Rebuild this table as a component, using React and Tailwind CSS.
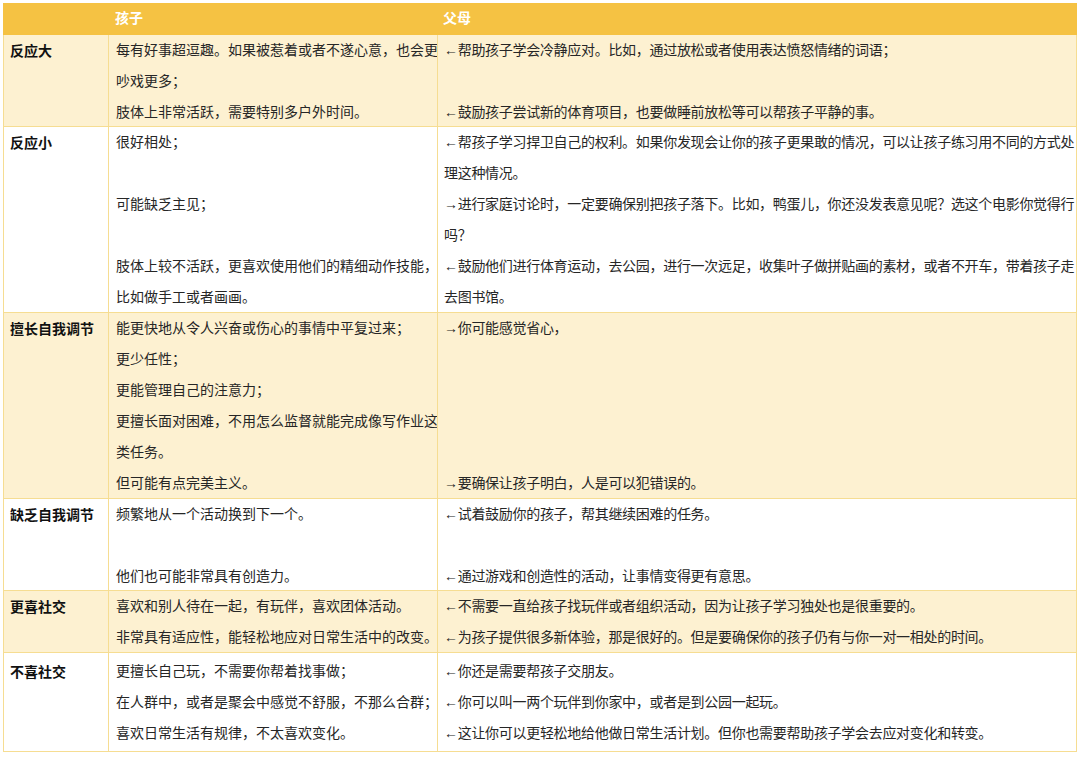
const rows = [
  {
    label: "反应大",
    shade: true,
    h: "h-[92px]",
    child: [
      "每有好事超逗趣。如果被惹着或者不遂心意，也会更",
      "吵戏更多；",
      "肢体上非常活跃，需要特别多户外时间。",
    ],
    parent: [
      "←帮助孩子学会冷静应对。比如，通过放松或者使用表达愤怒情绪的词语；",
      "",
      "←鼓励孩子尝试新的体育项目，也要做睡前放松等可以帮孩子平静的事。",
    ],
  },
  {
    label: "反应小",
    shade: false,
    h: "h-[186px]",
    child: [
      "很好相处；",
      "",
      "可能缺乏主见；",
      "",
      "肢体上较不活跃，更喜欢使用他们的精细动作技能，",
      "比如做手工或者画画。",
    ],
    parent: [
      "←帮孩子学习捍卫自己的权利。如果你发现会让你的孩子更果敢的情况，可以让孩子练习用不同的方式处",
      "理这种情况。",
      "→进行家庭讨论时，一定要确保别把孩子落下。比如，鸭蛋儿，你还没发表意见呢？选这个电影你觉得行",
      "吗？",
      "←鼓励他们进行体育运动，去公园，进行一次远足，收集叶子做拼贴画的素材，或者不开车，带着孩子走",
      "去图书馆。",
    ],
  },
  {
    label: "擅长自我调节",
    shade: true,
    h: "h-[186px]",
    child: [
      "能更快地从令人兴奋或伤心的事情中平复过来；",
      "更少任性；",
      "更能管理自己的注意力；",
      "更擅长面对困难，不用怎么监督就能完成像写作业这",
      "类任务。",
      "但可能有点完美主义。",
    ],
    parent: [
      "→你可能感觉省心，",
      "",
      "",
      "",
      "",
      "→要确保让孩子明白，人是可以犯错误的。",
    ],
  },
  {
    label: "缺乏自我调节",
    shade: false,
    h: "h-[92px]",
    child: ["频繁地从一个活动换到下一个。", "", "他们也可能非常具有创造力。"],
    parent: [
      "←试着鼓励你的孩子，帮其继续困难的任务。",
      "",
      "←通过游戏和创造性的活动，让事情变得更有意思。",
    ],
  },
  {
    label: "更喜社交",
    shade: true,
    h: "h-[62px]",
    child: [
      "喜欢和别人待在一起，有玩伴，喜欢团体活动。",
      "非常具有适应性，能轻松地应对日常生活中的改变。",
    ],
    parent: [
      "←不需要一直给孩子找玩伴或者组织活动，因为让孩子学习独处也是很重要的。",
      "←为孩子提供很多新体验，那是很好的。但是要确保你的孩子仍有与你一对一相处的时间。",
    ],
  },
  {
    label: "不喜社交",
    shade: false,
    h: "h-[99px]",
    child: [
      "更擅长自己玩，不需要你帮着找事做；",
      "在人群中，或者是聚会中感觉不舒服，不那么合群；",
      "喜欢日常生活有规律，不太喜欢变化。",
    ],
    parent: [
      "←你还是需要帮孩子交朋友。",
      "←你可以叫一两个玩伴到你家中，或者是到公园一起玩。",
      "←这让你可以更轻松地给他做日常生活计划。但你也需要帮助孩子学会去应对变化和转变。",
    ],
  },
];

function Lines({ items, className }) {
  return (
    <div className={className}>
      {items.map((t, i) => (
        <div key={i} className="h-[31px] whitespace-nowrap leading-[31px]">
          {t}
        </div>
      ))}
    </div>
  );
}

export default function App() {
  return (
    <div className="min-h-screen bg-white px-[3px] pt-[3px] font-['Liberation_Serif','Noto_Sans_CJK_SC',serif] text-[14px] text-[#262626]">
      <div className="grid h-[32px] grid-cols-[105px_329px_1fr] bg-[#f5c243] font-bold leading-[32px] text-white">
        <div></div>
        <div className="pl-[7px]">孩子</div>
        <div className="pl-[6px]">父母</div>
      </div>

      {rows.map((row, idx) => (
        <div
          key={row.label}
          className={`grid grid-cols-[105px_329px_1fr] overflow-hidden border-b border-[#f6dd92] ${row.h} ${
            row.shade ? "bg-[#fdf1d1]" : "bg-white"
          }`}
        >
          <div
            className={`border-l border-[#f6dd92] pl-[6px] font-['Noto_Sans_CJK_SC',sans-serif] font-bold leading-[31px] text-[#111] ${
              idx === rows.length - 1 ? "pt-[3px]" : ""
            }`}
          >
            {row.label}
          </div>
          <Lines
            items={row.child}
            className={`border-l border-[#f6dd92] pl-[7px] ${idx === rows.length - 1 ? "pt-[3px]" : ""}`}
          />
          <Lines
            items={row.parent}
            className={`border-x border-[#f6dd92] pl-[6px] tracking-[-0.3px] ${idx === rows.length - 1 ? "pt-[3px]" : ""}`}
          />
        </div>
      ))}
    </div>
  );
}
